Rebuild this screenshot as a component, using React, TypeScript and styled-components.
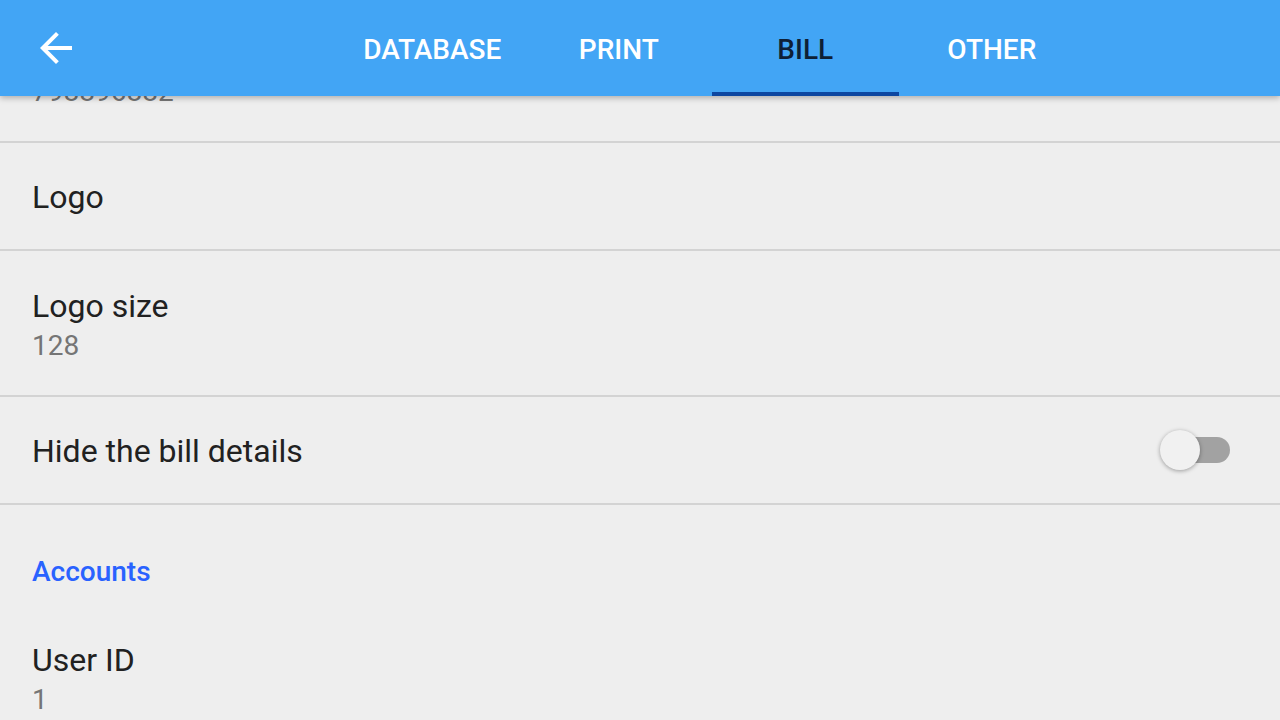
import styled, { createGlobalStyle } from "styled-components";

const GlobalStyle = createGlobalStyle`
  html, body {
    margin: 0;
    padding: 0;
    background: #eeeeee;
    overflow: hidden;
  }
  body {
    font-family: Roboto, "Noto Sans", "Liberation Sans", sans-serif;
  }
  * { box-sizing: border-box; }
`;

const tabs = ["Database", "Print", "Bill", "Other"];

type Pref =
  | { kind: "row"; title: string; summary?: string; toggle?: boolean }
  | { kind: "category"; title: string };

const prefs: Pref[] = [
  { kind: "row", title: "Phone", summary: "798896882" },
  { kind: "row", title: "Logo" },
  { kind: "row", title: "Logo size", summary: "128" },
  { kind: "row", title: "Hide the bill details", toggle: true },
  { kind: "category", title: "Accounts" },
  { kind: "row", title: "User ID", summary: "1" },
];

export default function App() {
  const active = "Bill";

  return (
    <Screen>
      <GlobalStyle />
      <AppBar>
        <BackButton type="button" aria-label="Back">
          <svg width="48" height="48" viewBox="0 0 24 24" fill="#ffffff">
            <path d="M20 11H7.83l5.59-5.59L12 4l-8 8 8 8 1.41-1.41L7.83 13H20v-2z" />
          </svg>
        </BackButton>
        <Tabs>
          {tabs.map((t) => (
            <Tab key={t} selected={t === active}>
              {t}
            </Tab>
          ))}
        </Tabs>
      </AppBar>

      <PrefList>
        {prefs.map((p, i) =>
          p.kind === "category" ? (
            <Category key={i}>{p.title}</Category>
          ) : (
            <Row key={i}>
              <RowText $twoLine={!!p.summary}>
                <Title>{p.title}</Title>
                {p.summary && <Summary>{p.summary}</Summary>}
              </RowText>
              {p.toggle && (
                <Switch>
                  <Track />
                  <Thumb />
                </Switch>
              )}
            </Row>
          )
        )}
      </PrefList>
    </Screen>
  );
}

const Screen = styled.div`
  width: 1280px;
  height: 720px;
  overflow: hidden;
  background: #eeeeee;
`;

const AppBar = styled.header`
  position: relative;
  z-index: 2;
  height: 96px;
  display: flex;
  align-items: stretch;
  background: #42a5f5;
  box-shadow: 0 2px 6px rgba(0, 0, 0, 0.28);
`;

const BackButton = styled.button`
  align-self: center;
  width: 48px;
  height: 48px;
  margin-left: 32px;
  padding: 0;
  border: none;
  background: none;
  display: flex;
  cursor: pointer;
`;

const Tabs = styled.nav`
  display: flex;
  margin-left: 259px;
`;

const Tab = styled.div<{ selected: boolean }>`
  width: 186.5px;
  display: flex;
  align-items: center;
  justify-content: center;
  padding-top: 6px;
  font-size: 28px;
  font-weight: 500;
  text-transform: uppercase;
  color: ${(p) => (p.selected ? "#0e1f36" : "#ffffff")};
  border-bottom: 4px solid ${(p) => (p.selected ? "#0d47a1" : "transparent")};
`;

const PrefList = styled.div`
  position: relative;
  z-index: 1;
  margin-top: -99px;
`;

const Row = styled.div`
  display: flex;
  align-items: center;
  padding: 0 50px 0 32px;
  border-bottom: 2px solid #d3d3d3;
`;

const RowText = styled.div<{ $twoLine: boolean }>`
  flex: 1;
  display: flex;
  flex-direction: column;
  padding: ${(p) => (p.$twoLine ? "35px 0 29px" : "34px 0 32px")};
`;

const Title = styled.div`
  font-size: 32px;
  line-height: 40px;
  color: #212121;
`;

const Summary = styled.div`
  font-size: 28px;
  line-height: 40px;
  color: #757575;
`;

const Category = styled.div`
  padding: 49px 32px 15px;
  font-size: 28px;
  line-height: 36px;
  font-weight: 500;
  color: #2962ff;
`;

const Switch = styled.div`
  position: relative;
  width: 70px;
  height: 44px;
  display: flex;
  align-items: center;
  justify-content: flex-end;
`;

const Track = styled.div`
  width: 60px;
  height: 26px;
  border-radius: 13px;
  background: #a2a2a2;
`;

const Thumb = styled.div`
  position: absolute;
  left: 0;
  top: 2px;
  width: 40px;
  height: 40px;
  border-radius: 50%;
  background: #f1f1f1;
  box-shadow: 0 1px 4px rgba(0, 0, 0, 0.35);
`;
